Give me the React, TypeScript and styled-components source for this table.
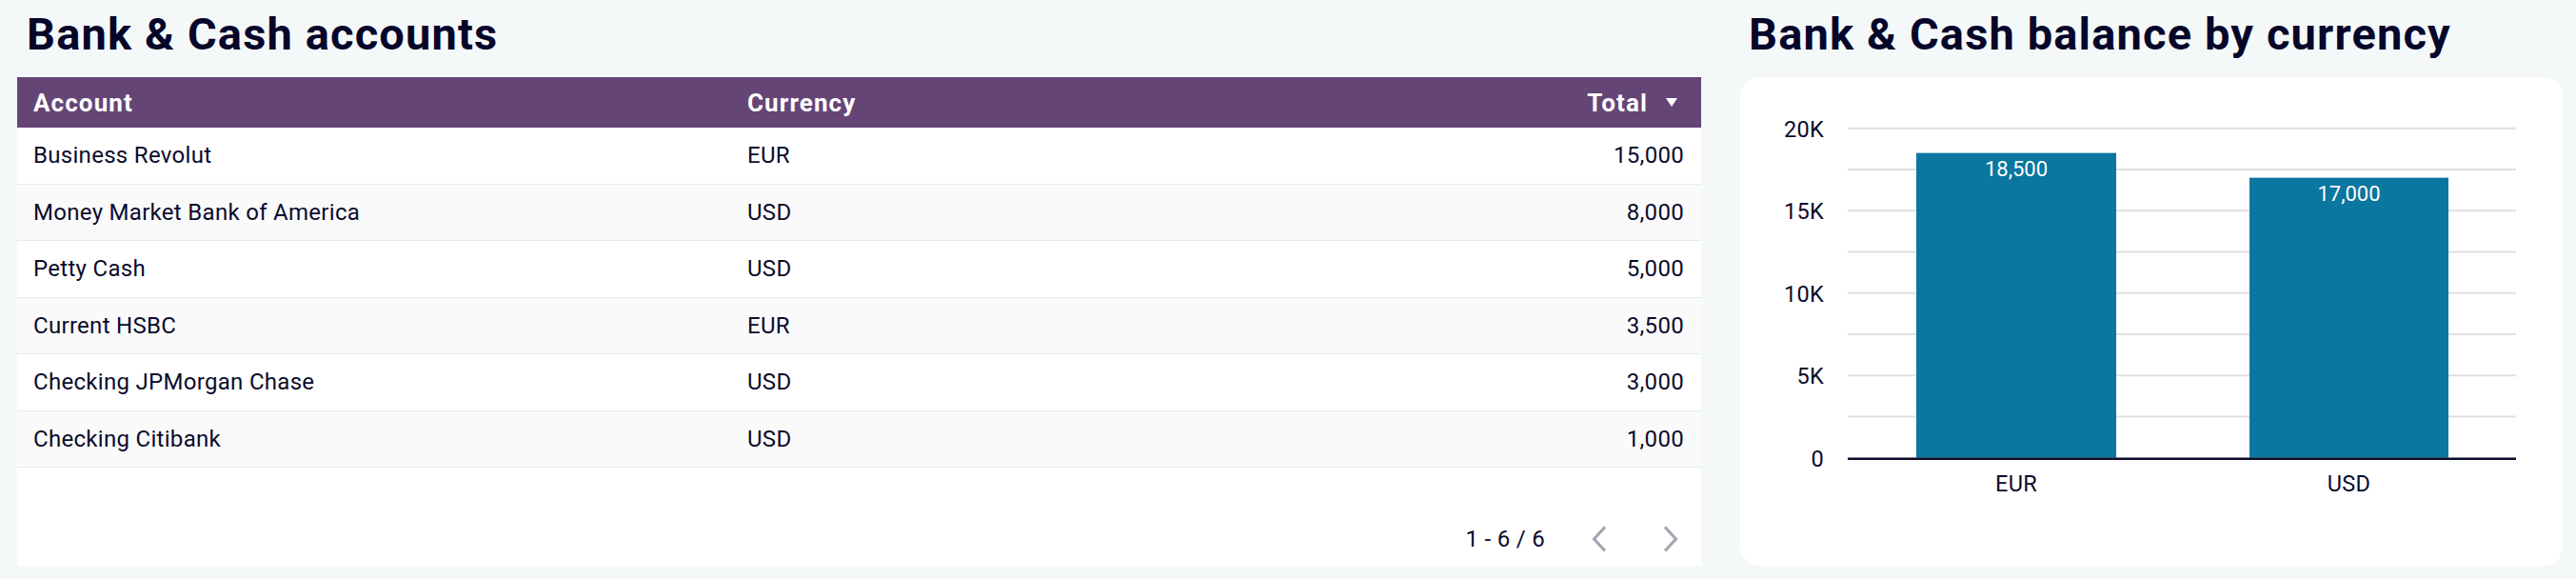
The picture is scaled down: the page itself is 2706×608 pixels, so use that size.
import React from "react";
import styled, { createGlobalStyle } from "styled-components";

const Global = createGlobalStyle`
  html, body { margin: 0; padding: 0; }
  body {
    background: #f5f8f9;
    font-family: Roboto, "Liberation Sans", sans-serif;
    color: #0b0b2c;
  }
`;

const Page = styled.div`
  display: flex;
  gap: 41px;
  padding: 0 14px 0 18px;
  height: 608px;
  box-sizing: border-box;
`;

const Section = styled.section<{ $w: number }>`
  width: ${(p) => p.$w}px;
  flex: none;
  display: flex;
  flex-direction: column;
`;

const Title = styled.h2<{ $inset: number }>`
  margin: 0;
  box-sizing: border-box;
  height: 81px;
  padding: ${(52 - 0.8415 * 47).toFixed(1)}px 0 0 ${(p) => p.$inset}px;
  font-size: 47px;
  line-height: 47px;
  letter-spacing: 1.15px;
  font-weight: 700;
  color: #06062a;
  white-space: nowrap;
`;

const Panel = styled.div`
  height: 513px;
  background: #ffffff;
  display: flex;
  flex-direction: column;
`;

const Card = styled.div`
  height: 513px;
  background: #ffffff;
  border-radius: 20px;
  overflow: hidden;
`;

const HeaderRow = styled.div`
  display: grid;
  grid-template-columns: 750px 1fr 320px;
  align-items: center;
  height: 53px;
  background: #654576;
  color: #ffffff;
  font-size: 26px;
  letter-spacing: 1.1px;
  font-weight: 700;
`;

const Row = styled.div<{ $alt: boolean }>`
  display: grid;
  grid-template-columns: 750px 1fr 320px;
  align-items: center;
  height: 59.5px;
  box-sizing: border-box;
  border-bottom: 1.6px solid #e6eaec;
  background: ${(p) => (p.$alt ? "#fafafa" : "#ffffff")};
  font-size: 24px;
  letter-spacing: 0.3px;
  color: #0b0b2c;
`;

const Cell = styled.div<{ $right?: boolean }>`
  padding: 0 ${(p) => (p.$right ? 18 : 17)}px 0 17px;
  text-align: ${(p) => (p.$right ? "right" : "left")};
  white-space: nowrap;
  overflow: hidden;
`;

const SortHead = styled.div`
  display: flex;
  justify-content: flex-end;
  align-items: center;
  gap: 19px;
  padding-right: 25px;
`;

const Footer = styled.div`
  margin-top: auto;
  height: 56px;
  display: flex;
  justify-content: flex-end;
  align-items: center;
  padding-right: 12px;
  font-size: 24px;
  letter-spacing: 0.3px;
  color: #0b0b2c;
`;

const PageInfo = styled.span`
  margin-right: 37px;
`;

const NavButton = styled.button`
  width: 40px;
  height: 40px;
  border: none;
  background: transparent;
  padding: 0;
  display: flex;
  align-items: center;
  justify-content: center;
  & + & { margin-left: 35px; }
`;

const rows = [
  ["Business Revolut", "EUR", "15,000"],
  ["Money Market Bank of America", "USD", "8,000"],
  ["Petty Cash", "USD", "5,000"],
  ["Current HSBC", "EUR", "3,500"],
  ["Checking JPMorgan Chase", "USD", "3,000"],
  ["Checking Citibank", "USD", "1,000"],
];

const Chevron = ({ dir }: { dir: "l" | "r" }) => (
  <svg width="16" height="28" viewBox="0 0 16 28">
    <polyline
      points={dir === "l" ? "14,1.5 2.5,14 14,26.5" : "2,1.5 13.5,14 2,26.5"}
      fill="none"
      stroke="#a3a6b0"
      strokeWidth="3.2"
    />
  </svg>
);

const SortIcon = () => (
  <svg width="12" height="9" viewBox="0 0 12 9">
    <polygon points="0,0 12,0 6,9" fill="#ffffff" />
  </svg>
);

const ChartSvg = styled.svg`
  display: block;
  font-family: Roboto, "Liberation Sans", sans-serif;
`;

const BarChart = () => {
  const x0 = 113;
  const x1 = 815;
  const yTop = 53.7;
  const yZero = 399.7;
  const max = 20000;
  const y = (v: number) => yZero - (v / max) * (yZero - yTop);
  const grid = [2500, 5000, 7500, 10000, 12500, 15000, 17500, 20000];
  const labels: [number, string][] = [
    [0, "0"],
    [5000, "5K"],
    [10000, "10K"],
    [15000, "15K"],
    [20000, "20K"],
  ];
  const bars = [
    { cat: "EUR", v: 18500, l: 185, r: 395, label: "18,500" },
    { cat: "USD", v: 17000, l: 535, r: 744, label: "17,000" },
  ];
  return (
    <ChartSvg width="864" height="513" viewBox="0 0 864 513">
      {grid.map((g) => (
        <line key={g} x1={x0} x2={x1} y1={y(g)} y2={y(g)} stroke="#dfdfdf" strokeWidth="2" />
      ))}
      {labels.map(([v, t]) => (
        <text
          key={t}
          x={88}
          y={y(v) + 1}
          textAnchor="end"
          dominantBaseline="central"
          fontSize="23.5"
          letterSpacing="0.3"
          fill="#0b0b2c"
        >
          {t}
        </text>
      ))}
      {bars.map((b) => (
        <g key={b.cat}>
          <rect x={b.l} y={y(b.v)} width={b.r - b.l} height={yZero - y(b.v)} fill="#0b769f" />
          <text
            x={(b.l + b.r) / 2}
            y={y(b.v) + 17}
            textAnchor="middle"
            dominantBaseline="central"
            fontSize="22"
            fill="#ffffff"
          >
            {b.label}
          </text>
          <text
            x={(b.l + b.r) / 2}
            y={427}
            textAnchor="middle"
            dominantBaseline="central"
            fontSize="23.5"
            letterSpacing="0.3"
            fill="#0b0b2c"
          >
            {b.cat}
          </text>
        </g>
      ))}
      <line x1={x0} x2={x1} y1={yZero + 1} y2={yZero + 1} stroke="#0b0b2c" strokeWidth="2.4" />
    </ChartSvg>
  );
};

export default function App() {
  return (
    <>
      <Global />
      <Page>
        <Section $w={1769}>
          <Title $inset={10}>Bank &amp; Cash accounts</Title>
          <Panel>
            <HeaderRow>
              <Cell>Account</Cell>
              <Cell>Currency</Cell>
              <SortHead>
                <span>Total</span>
                <SortIcon />
              </SortHead>
            </HeaderRow>
            {rows.map((r, i) => (
              <Row key={r[0]} $alt={i % 2 === 1}>
                <Cell>{r[0]}</Cell>
                <Cell>{r[1]}</Cell>
                <Cell $right>{r[2]}</Cell>
              </Row>
            ))}
            <Footer>
              <PageInfo>1 - 6 / 6</PageInfo>
              <NavButton aria-label="Previous page">
                <Chevron dir="l" />
              </NavButton>
              <NavButton aria-label="Next page">
                <Chevron dir="r" />
              </NavButton>
            </Footer>
          </Panel>
        </Section>
        <Section $w={864}>
          <Title $inset={9}>Bank &amp; Cash balance by currency</Title>
          <Card>
            <BarChart />
          </Card>
        </Section>
      </Page>
    </>
  );
}
